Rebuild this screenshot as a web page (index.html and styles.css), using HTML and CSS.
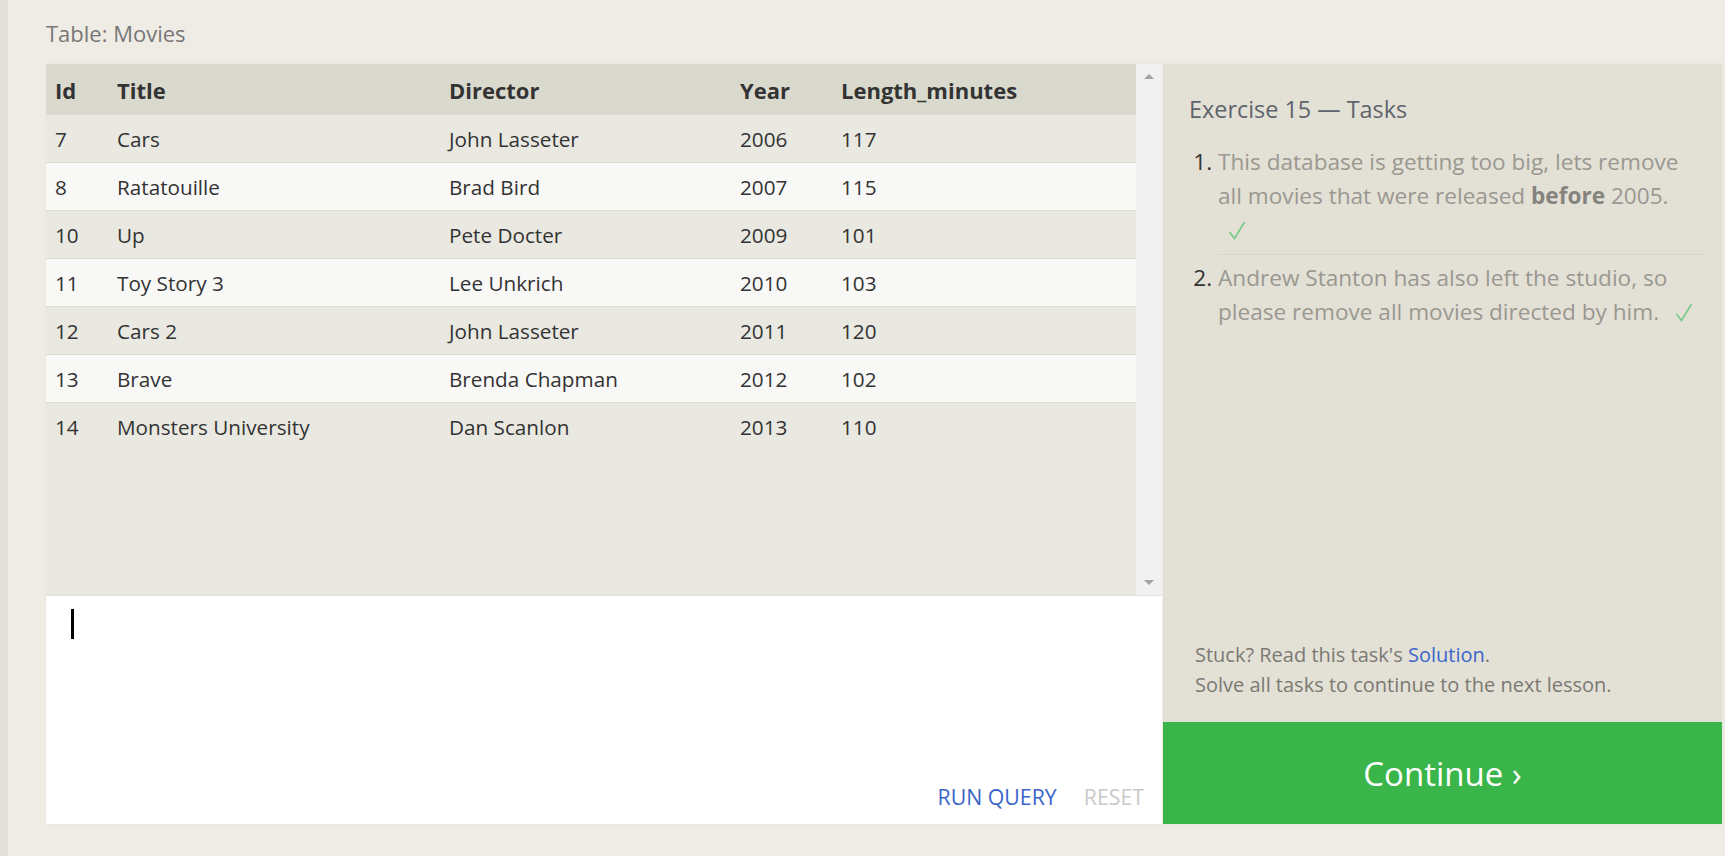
FILE: index.html
```html
<!DOCTYPE html>
<html>
<head>
<meta charset="utf-8">
<link rel="stylesheet" href="styles.css">
</head>
<body>
<div class="page">
  <div class="table-caption">Table: Movies</div>
  <div class="workspace">
    <div class="left">
      <div class="results">
        <div class="table-wrap">
          <table class="movies">
            <thead>
              <tr><th class="c-id">Id</th><th class="c-title">Title</th><th class="c-dir">Director</th><th class="c-year">Year</th><th>Length_minutes</th></tr>
            </thead>
            <tbody>
              <tr><td>7</td><td>Cars</td><td>John Lasseter</td><td>2006</td><td>117</td></tr>
              <tr><td>8</td><td>Ratatouille</td><td>Brad Bird</td><td>2007</td><td>115</td></tr>
              <tr><td>10</td><td>Up</td><td>Pete Docter</td><td>2009</td><td>101</td></tr>
              <tr><td>11</td><td>Toy Story 3</td><td>Lee Unkrich</td><td>2010</td><td>103</td></tr>
              <tr><td>12</td><td>Cars 2</td><td>John Lasseter</td><td>2011</td><td>120</td></tr>
              <tr><td>13</td><td>Brave</td><td>Brenda Chapman</td><td>2012</td><td>102</td></tr>
              <tr><td>14</td><td>Monsters University</td><td>Dan Scanlon</td><td>2013</td><td>110</td></tr>
            </tbody>
          </table>
        </div>
        <div class="scrollbar">
          <span class="arrow up"></span>
          <span class="arrow down"></span>
        </div>
      </div>
      <div class="editor">
        <div class="cursor"></div>
        <div class="editor-actions">
          <span class="run">RUN QUERY</span>
          <span class="reset">RESET</span>
        </div>
      </div>
    </div>
    <div class="panel">
      <div class="tasks">
        <h2 class="tasks-title">Exercise 15 — Tasks</h2>
        <ol class="task-list">
          <li class="task">This database is getting too big, lets remove all movies that were released <strong>before</strong> 2005. <span class="check"><svg width="18" height="19" viewBox="0 0 18 19"><polyline points="1.5,11 6.5,17.5 16.5,1" fill="none" stroke="#78c987" stroke-width="1.6"/></svg></span></li>
          <li class="task">Andrew Stanton has also left the studio, so please remove all movies directed by him. <span class="check"><svg width="18" height="19" viewBox="0 0 18 19"><polyline points="1.5,11 6.5,17.5 16.5,1" fill="none" stroke="#78c987" stroke-width="1.6"/></svg></span></li>
        </ol>
      </div>
      <div class="hint">
        <div>Stuck? Read this task's <a class="solution">Solution</a>.</div>
        <div>Solve all tasks to continue to the next lesson.</div>
      </div>
      <div class="continue">Continue ›</div>
    </div>
  </div>
</div>
</body>
</html>
```

FILE: styles.css
```css
html, body {
  margin: 0;
  padding: 0;
}
body {
  background: #efece5;
  font-family: "Open Sans", "Noto Sans", sans-serif;
  color: #333;
  height: 856px;
  overflow: hidden;
}
.page {
  border-left: 8px solid #e2dfd9;
  height: 856px;
  box-sizing: border-box;
  padding-left: 38px;
}
.table-caption {
  font-size: 22px;
  color: #777;
  height: 64px;
  line-height: 66px;
}
.workspace {
  display: flex;
  width: 1676px;
  height: 760px;
  box-shadow: 0 0 2px rgba(0,0,0,0.06);
}
.left {
  width: 1116px;
  display: flex;
  flex-direction: column;
}
.results {
  height: 531px;
  display: flex;
  background: #e9e8e1;
}
.table-wrap {
  flex: 1;
}
.movies {
  border-collapse: collapse;
  table-layout: fixed;
  width: 100%;
  font-size: 20.7px;
}
.movies th {
  background: #dad9ce;
  text-align: left;
  font-weight: 700;
  font-size: 22px;
  height: 48px;
  padding: 2px 0 0 9px;
  color: #333;
}
.movies td {
  height: 47px;
  padding: 0 0 0 9px;
  border-top: 1px solid #dcdbd4;
  color: #333;
}
.movies tbody tr:nth-child(odd) td {
  background: #e9e8e1;
}
.movies tbody tr:nth-child(even) td {
  background: #f8f8f7;
}
.c-id { width: 53px; }
.c-title { width: 323px; }
.c-dir { width: 282px; }
.c-year { width: 92px; }
.scrollbar {
  width: 26px;
  background: #f1f1f1;
  display: flex;
  flex-direction: column;
  justify-content: space-between;
  align-items: center;
  padding: 10px 0 10px;
  box-sizing: border-box;
}
.arrow {
  width: 0;
  height: 0;
  border-left: 5px solid transparent;
  border-right: 5px solid transparent;
}
.arrow.up {
  border-bottom: 5px solid #a3a3a3;
}
.arrow.down {
  border-top: 5px solid #a3a3a3;
}
.editor {
  flex: 1;
  background: #fff;
  display: flex;
  flex-direction: column;
  justify-content: space-between;
  padding: 13px 0 13px 25px;
  box-sizing: border-box;
  border-top: 1px solid #e2e1da;
}
.cursor {
  width: 3px;
  height: 30px;
  background: #000;
}
.editor-actions {
  display: flex;
  justify-content: flex-end;
  gap: 27px;
  padding-right: 18px;
  font-size: 21.3px;
}
.run { color: #3a66c9; }
.reset { color: #c9c9c9; }
.panel {
  flex: 1;
  margin-left: 1px;
  background: #e3e0d6;
  display: flex;
  flex-direction: column;
}
.tasks {
  flex: 1;
  padding: 29px 17px 0 26px;
}
.tasks-title {
  margin: 0;
  font-weight: 400;
  font-size: 23.4px;
  line-height: 32px;
  color: #5f646c;
}
.task-list {
  margin: 20px 0 0 0;
  padding: 0 0 0 29px;
  font-size: 22.6px;
  line-height: 34px;
  color: #9a9891;
}
.task-list li::marker {
  color: #333;
}
.task {
  padding: 0 8px 7px 0;
  margin: 0 0 6px 0;
  border-bottom: 1px solid #d8d5cb;
}
.task:last-child {
  border-bottom: none;
}
.task strong {
  color: #85837e;
}
.check {
  margin-left: 10px;
  display: inline-block;
  vertical-align: -2px;
}
.check svg {
  display: block;
}
.hint {
  padding: 0 20px 22px 32px;
  font-size: 20px;
  line-height: 30px;
  color: #7b7973;
}
.solution {
  color: #3a66c9;
}
.continue {
  height: 102px;
  background: #3ab54a;
  color: #fff;
  font-size: 33px;
  display: flex;
  align-items: center;
  justify-content: center;
}
```
